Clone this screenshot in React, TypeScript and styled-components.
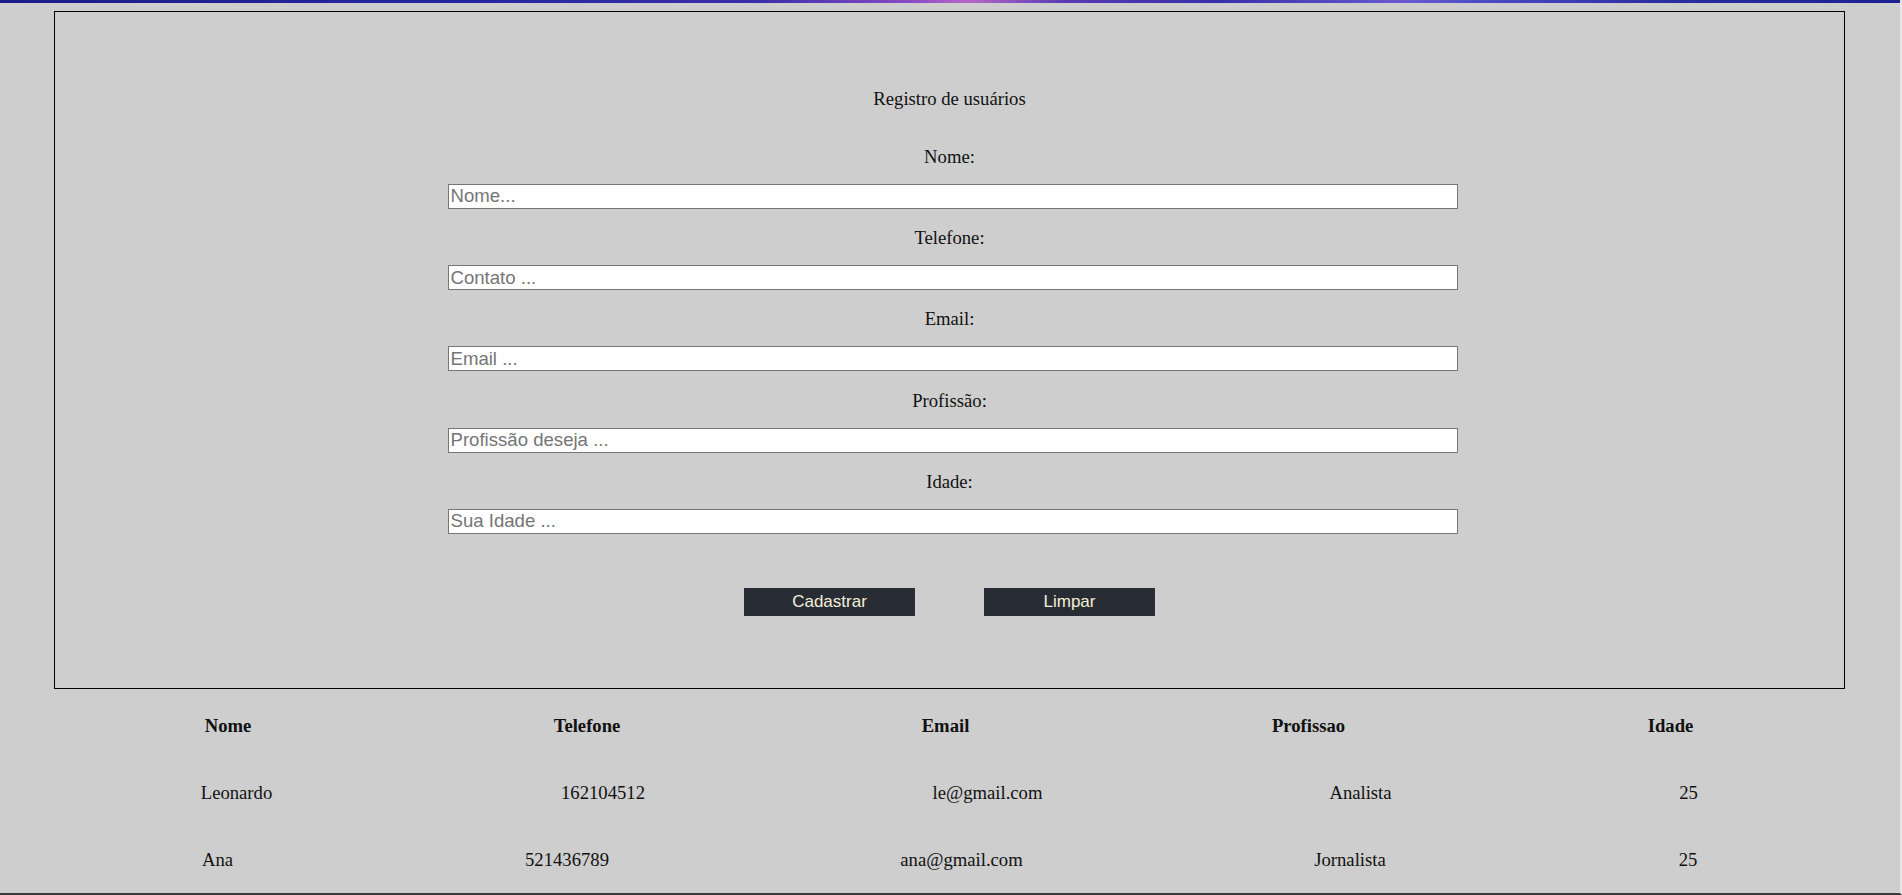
import React, { useState } from "react";
import styled, { createGlobalStyle } from "styled-components";

interface Usuario {
	nome: string;
	telefone: string;
	email: string;
	profissao: string;
	idade: string;
}

// deslocamento de cada célula em relação ao centro da coluna (px)
const headerNudge = [0, -2, -4.5, -2.5, -1.5];

const usuarios: { dados: Usuario; nudge: number[] }[] = [
	{
		dados: {
			nome: "Leonardo",
			telefone: "162104512",
			email: "le@gmail.com",
			profissao: "Analista",
			idade: "25",
		},
		nudge: [8.5, 14, 37.5, 49.5, 16.5],
	},
	{
		dados: {
			nome: "Ana",
			telefone: "521436789",
			email: "ana@gmail.com",
			profissao: "Jornalista",
			idade: "25",
		},
		nudge: [-10.5, -22, 11.5, 39, 16],
	},
];

const campos = [
	{ label: "Nome:", name: "nome", placeholder: "Nome..." },
	{ label: "Telefone:", name: "telefone", placeholder: "Contato ..." },
	{ label: "Email:", name: "email", placeholder: "Email ..." },
	{ label: "Profissão:", name: "profissao", placeholder: "Profissão deseja ..." },
	{ label: "Idade:", name: "idade", placeholder: "Sua Idade ..." },
];

const empty: Usuario = { nome: "", telefone: "", email: "", profissao: "", idade: "" };

export default function App() {
	const [form, setForm] = useState<Usuario>(empty);

	return (
		<>
			<GlobalStyle />
			<Page>
				<TopStrip />
				<FormBox>
					<Title>Registro de usuários</Title>
					{campos.map((c) => (
						<Field key={c.name}>
							<Label htmlFor={c.name}>{c.label}</Label>
							<Input
								id={c.name}
								placeholder={c.placeholder}
								value={form[c.name as keyof Usuario]}
								onChange={(e) => setForm({ ...form, [c.name]: e.target.value })}
							/>
						</Field>
					))}
					<Buttons>
						<Button type="button">Cadastrar</Button>
						<Button type="button" onClick={() => setForm(empty)}>
							Limpar
						</Button>
					</Buttons>
				</FormBox>

				<Table>
					{["Nome", "Telefone", "Email", "Profissao", "Idade"].map((h, i) => (
						<HeadCell key={h} $nudge={headerNudge[i]}>
							{h}
						</HeadCell>
					))}
					{usuarios.map((u) =>
						Object.values(u.dados).map((v, i) => (
							<Cell key={`${u.dados.nome}-${i}`} $nudge={u.nudge[i]}>
								{v}
							</Cell>
						))
					)}
				</Table>
			</Page>
		</>
	);
}

const GlobalStyle = createGlobalStyle`
	html, body {
		margin: 0;
		padding: 0;
		background: #cecece;
	}
	body {
		font-family: "Liberation Serif", "Times New Roman", serif;
		font-size: 18.67px;
		color: #111;
	}
`;

const Page = styled.div`
	box-sizing: border-box;
	width: 1902px;
	height: 100vh;
	overflow: hidden;
	display: flex;
	flex-direction: column;
	background: #cecece;
	border-right: 2px solid #e6e6e6;
	border-bottom: 2px solid #3a3a3c;
`;

const TopStrip = styled.div`
	height: 3px;
	flex-shrink: 0;
	background: linear-gradient(
		90deg,
		#1b1d86 0%,
		#2527a0 25%,
		#3a2fa8 40%,
		#8a4cc4 48%,
		#b866c8 51%,
		#5a3bb4 56%,
		#3630a6 64%,
		#6a5ad0 74%,
		#4a4cc0 78%,
		#2a2d9e 88%,
		#1d2090 100%
	);
`;

const FormBox = styled.form`
	box-sizing: border-box;
	width: 1791px;
	margin: 8px 0 0 54px;
	padding: 76px 0 72px;
	border: 1px solid #000;
	display: flex;
	flex-direction: column;
	align-items: center;
`;

const Title = styled.p`
	margin: 0 0 18.5px;
	line-height: 21px;
`;

const Field = styled.div`
	display: flex;
	flex-direction: column;
	align-items: center;
`;

const Label = styled.label`
	margin: 18.25px 0 17px;
	line-height: 21px;
`;

const Input = styled.input`
	box-sizing: border-box;
	width: 1010px;
	height: 25px;
	margin-left: 6px;
	padding: 1px 2px;
	border: 1px solid #767676;
	border-radius: 0;
	background: #fff;
	font-family: "Liberation Sans", Arial, sans-serif;
	font-size: 18.6px;
	color: #111;
	outline: none;

	&::placeholder {
		color: #757575;
	}
`;

const Buttons = styled.div`
	display: flex;
	gap: 69px;
	margin-top: 54.5px;
`;

const Button = styled.button`
	width: 171px;
	height: 28px;
	padding: 0;
	border: none;
	background: #282c34;
	color: #f4eed8;
	font-family: "Liberation Sans", Arial, sans-serif;
	font-size: 17px;
	cursor: pointer;
`;

const Table = styled.div`
	display: grid;
	grid-template-columns: repeat(5, 361px);
	justify-content: center;
	row-gap: 46px;
	margin-top: 25.5px;
	width: 1900px;
	line-height: 21px;
`;

const HeadCell = styled.div<{ $nudge: number }>`
	text-align: center;
	font-weight: bold;
	transform: translateX(${(p) => p.$nudge}px);
`;

const Cell = styled.div<{ $nudge: number }>`
	text-align: center;
	transform: translateX(${(p) => p.$nudge}px);
`;
